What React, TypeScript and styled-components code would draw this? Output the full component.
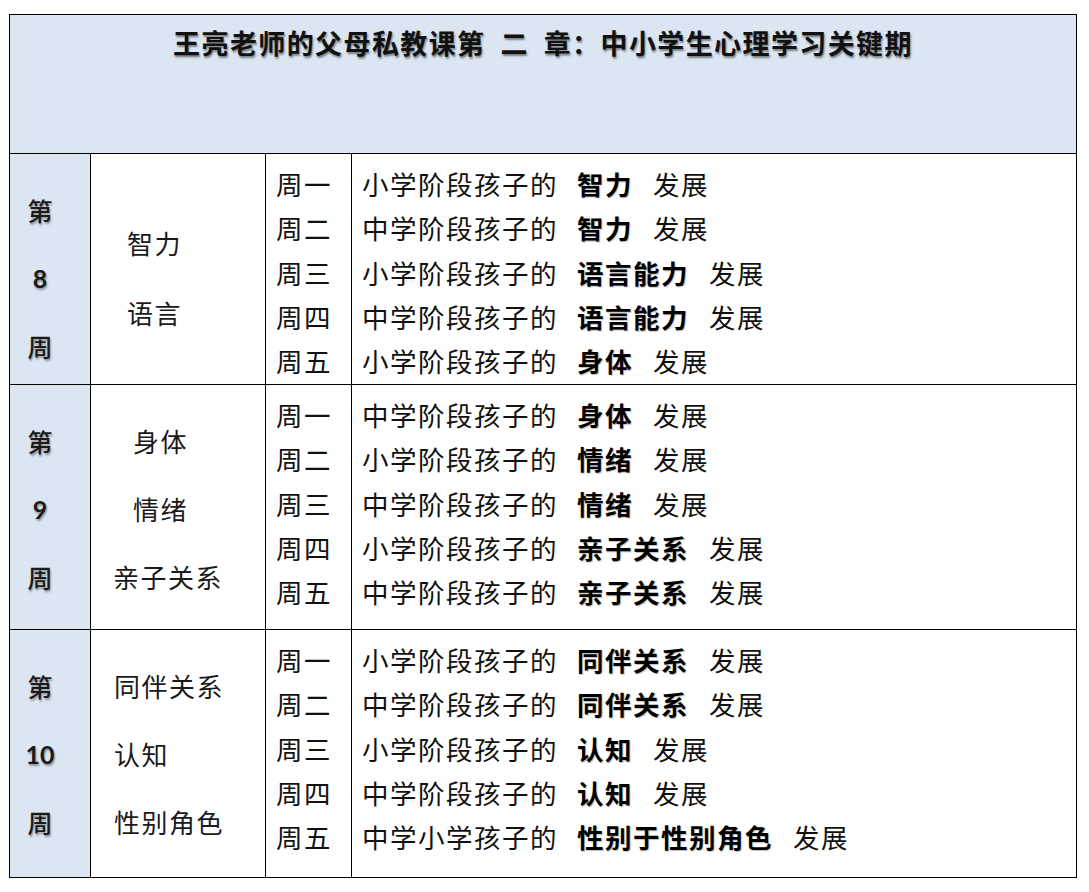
import styled, { createGlobalStyle } from "styled-components";

const GlobalStyle = createGlobalStyle`
  body {
    margin: 0;
    background: #ffffff;
    font-family: "Noto Sans CJK SC", "Noto Sans", sans-serif;
  }
`;

const Table = styled.div`
  box-sizing: border-box;
  width: 1068px;
  margin: 14px 0 0 9px;
  border: 1px solid #000;
  color: #111;
`;

const Header = styled.div`
  box-sizing: border-box;
  height: 139px;
  padding-top: 9px;
  background: #dce6f2;
  border-bottom: 1px solid #000;
  text-align: center;
`;

const Title = styled.h1`
  margin: 0;
  font-size: 27px;
  line-height: 38px;
  font-weight: 700;
  letter-spacing: 1.4px;
  color: #111;
  text-shadow: 1px 2px 2px rgba(0, 0, 0, 0.45);
`;

const Section = styled.div<{ $height: number; $last?: boolean }>`
  box-sizing: border-box;
  height: ${(p) => p.$height}px;
  display: grid;
  grid-template-columns: 81px 175px 86px 1fr;
  border-bottom: ${(p) => (p.$last ? "none" : "1px solid #000")};
`;

const WeekCell = styled.div`
  box-sizing: border-box;
  background: #dce6f2;
  border-right: 1px solid #000;
  padding: 22px 20px 0 0;
  text-align: center;
`;

const WeekLine = styled.div<{ $num?: boolean }>`
  height: 68px;
  line-height: 68px;
  font-family: ${(p) =>
    p.$num ? `Lato, "Open Sans", sans-serif` : `"Noto Sans CJK SC", sans-serif`};
  font-size: 25px;
  font-weight: ${(p) => (p.$num ? 700 : 500)};
  color: #1a1a1a;
  text-shadow: 1px 2px 2px rgba(0, 0, 0, 0.35);
`;

const TopicCell = styled.div<{ $top: number }>`
  box-sizing: border-box;
  border-right: 1px solid #000;
  padding-top: ${(p) => p.$top}px;
`;

const Topic = styled.div<{ $indent: number; $line: number }>`
  height: ${(p) => p.$line}px;
  line-height: ${(p) => p.$line}px;
  padding-left: ${(p) => p.$indent}px;
  font-size: 26px;
  letter-spacing: 1.5px;
  color: #1a1a1a;
`;

const DayCell = styled.div`
  box-sizing: border-box;
  border-right: 1px solid #000;
  padding: 8px 0 0 10px;
`;

const DescCell = styled.div`
  box-sizing: border-box;
  padding: 8px 0 0 10px;
`;

const Line = styled.div`
  height: 44.3px;
  line-height: 44.3px;
  font-size: 26.5px;
  letter-spacing: 1.5px;
  white-space: nowrap;
  color: #111;
`;

const Key = styled.b`
  display: inline-block;
  margin: 0 20px 0 19px;
  font-weight: 700;
  color: #000;
  text-shadow: 1px 1px 1px rgba(0, 0, 0, 0.25);
`;

interface Day {
  day: string;
  who: string;
  key: string;
}

interface Week {
  num: string;
  height: number;
  topicTop: number;
  topicLine: number;
  topics: { text: string; indent: number }[];
  days: Day[];
}

const weeks: Week[] = [
  {
    num: "8",
    height: 231,
    topicTop: 54,
    topicLine: 70,
    topics: [
      { text: "智力", indent: 36 },
      { text: "语言", indent: 36 },
    ],
    days: [
      { day: "周一", who: "小学阶段孩子的", key: "智力" },
      { day: "周二", who: "中学阶段孩子的", key: "智力" },
      { day: "周三", who: "小学阶段孩子的", key: "语言能力" },
      { day: "周四", who: "中学阶段孩子的", key: "语言能力" },
      { day: "周五", who: "小学阶段孩子的", key: "身体" },
    ],
  },
  {
    num: "9",
    height: 245,
    topicTop: 22,
    topicLine: 68,
    topics: [
      { text: "身体", indent: 42 },
      { text: "情绪", indent: 42 },
      { text: "亲子关系", indent: 22 },
    ],
    days: [
      { day: "周一", who: "中学阶段孩子的", key: "身体" },
      { day: "周二", who: "小学阶段孩子的", key: "情绪" },
      { day: "周三", who: "中学阶段孩子的", key: "情绪" },
      { day: "周四", who: "小学阶段孩子的", key: "亲子关系" },
      { day: "周五", who: "中学阶段孩子的", key: "亲子关系" },
    ],
  },
  {
    num: "10",
    height: 247,
    topicTop: 22,
    topicLine: 68,
    topics: [
      { text: "同伴关系", indent: 23 },
      { text: "认知", indent: 23 },
      { text: "性别角色", indent: 23 },
    ],
    days: [
      { day: "周一", who: "小学阶段孩子的", key: "同伴关系" },
      { day: "周二", who: "中学阶段孩子的", key: "同伴关系" },
      { day: "周三", who: "小学阶段孩子的", key: "认知" },
      { day: "周四", who: "中学阶段孩子的", key: "认知" },
      { day: "周五", who: "中学小学孩子的", key: "性别于性别角色" },
    ],
  },
];

const App = () => {
  return (
    <>
      <GlobalStyle />
      <Table>
        <Header>
          <Title>王亮老师的父母私教课第&ensp;二&ensp;章：中小学生心理学习关键期</Title>
        </Header>
        {weeks.map((week, i) => (
          <Section key={week.num} $height={week.height} $last={i === weeks.length - 1}>
            <WeekCell>
              <WeekLine>第</WeekLine>
              <WeekLine $num>{week.num}</WeekLine>
              <WeekLine>周</WeekLine>
            </WeekCell>
            <TopicCell $top={week.topicTop}>
              {week.topics.map((t) => (
                <Topic key={t.text} $indent={t.indent} $line={week.topicLine}>
                  {t.text}
                </Topic>
              ))}
            </TopicCell>
            <DayCell>
              {week.days.map((d) => (
                <Line key={d.day}>{d.day}</Line>
              ))}
            </DayCell>
            <DescCell>
              {week.days.map((d) => (
                <Line key={d.day}>
                  {d.who}
                  <Key>{d.key}</Key>
                  发展
                </Line>
              ))}
            </DescCell>
          </Section>
        ))}
      </Table>
    </>
  );
};

export default App;
